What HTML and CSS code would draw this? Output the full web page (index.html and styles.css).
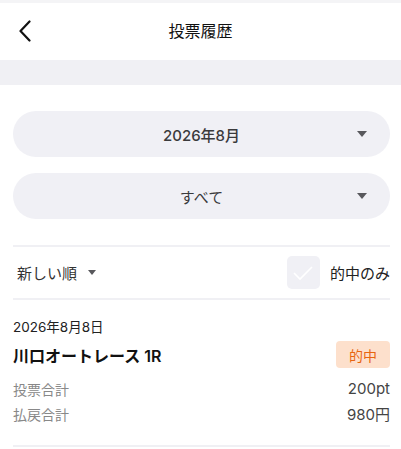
FILE: index.html
```html
<!DOCTYPE html>
<html lang="ja">
<head>
<meta charset="utf-8">
<link rel="stylesheet" href="styles.css">
</head>
<body>
<div class="header">
  <div class="back">
    <svg width="14" height="22" viewBox="0 0 14 22"><path d="M11.5 1.5 L2.5 11 L11.5 20.5" fill="none" stroke="#111" stroke-width="2.2" stroke-linecap="round" stroke-linejoin="round"/></svg>
  </div>
  <div class="title">投票履歴</div>
</div>
<div class="band"></div>
<div class="content">
  <div class="select"><span>2026年8月</span><i class="tri"></i></div>
  <div class="select second"><span>すべて</span><i class="tri"></i></div>
  <div class="filter">
    <div class="sort">新しい順<i class="tri small"></i></div>
    <div class="hit">
      <div class="check"><svg width="22" height="16" viewBox="0 0 22 16"><path d="M2 8 L8 14 L20 2" fill="none" stroke="#fff" stroke-width="1.6"/></svg></div>
      <span>的中のみ</span>
    </div>
  </div>
  <div class="card">
    <div class="date">2026年8月8日</div>
    <div class="head">
      <div class="race">川口オートレース 1R</div>
      <div class="badge">的中</div>
    </div>
    <div class="row"><span class="lab">投票合計</span><span class="val">200pt</span></div>
    <div class="row"><span class="lab">払戻合計</span><span class="val">980円</span></div>
  </div>
</div>
</body>
</html>
```
FILE: styles.css
```css
* { box-sizing: border-box; }
body {
  margin: 0;
  background: #fff;
  font-family: Inter, "Noto Sans CJK JP", sans-serif;
  color: #111;
}
.header {
  height: 60px;
  border-top: 3px solid #f4f4f6;
  display: flex;
  align-items: center;
  justify-content: center;
  position: relative;
}
.back {
  position: absolute;
  left: 18px;
  top: 17px;
  display: flex;
}
.title {
  font-size: 16px;
  font-weight: 400;
  margin-top: -3px;
}
.band {
  height: 25px;
  background: #f0f0f4;
}
.content {
  padding: 26px 11px 0 13px;
}
.select {
  height: 46px;
  border-radius: 23px;
  background: #f0f0f5;
  display: flex;
  align-items: center;
  justify-content: center;
  position: relative;
  font-size: 15px;
  font-weight: 500;
  color: #3a3a3c;
}
.select.second {
  margin-top: 16px;
  font-weight: 400;
}
.tri {
  width: 0;
  height: 0;
  border-left: 5px solid transparent;
  border-right: 5px solid transparent;
  border-top: 6px solid #58585c;
}
.select .tri {
  position: absolute;
  right: 23px;
  top: 20px;
}
.filter {
  margin-top: 26px;
  border-top: 2px solid #f0f0f4;
  border-bottom: 2px solid #f0f0f4;
  height: 55px;
  display: flex;
  align-items: center;
  justify-content: space-between;
}
.sort {
  display: flex;
  align-items: center;
  font-size: 15px;
  color: #333;
  padding-left: 4px;
}
.tri.small {
  margin-left: 11px;
  border-left-width: 4.5px;
  border-right-width: 4.5px;
  border-top-width: 5px;
}
.hit {
  display: flex;
  align-items: center;
  font-size: 15px;
  color: #222;
}
.check {
  width: 33px;
  height: 33px;
  border-radius: 5px;
  background: #f0f0f5;
  display: flex;
  align-items: center;
  justify-content: center;
  margin-right: 10px;
}
.card {
  padding-top: 18px;
  padding-bottom: 19px;
  border-bottom: 2px solid #f0f0f4;
}
.date {
  font-size: 13.5px;
  line-height: 18px;
  color: #222;
}
.head {
  display: flex;
  justify-content: space-between;
  align-items: center;
  margin-top: 5px;
}
.race {
  font-size: 16px;
  font-weight: 600;
  color: #111;
}
.badge {
  width: 54px;
  height: 27px;
  border-radius: 4px;
  background: #fde0cc;
  color: #e8650f;
  font-size: 14px;
  display: flex;
  align-items: center;
  justify-content: center;
}
.row {
  display: flex;
  justify-content: space-between;
  align-items: center;
  height: 25px;
}
.head + .row { margin-top: 8px; }
.lab {
  font-size: 14px;
  color: #888;
}
.val {
  font-size: 15px;
  color: #444;
}
```
